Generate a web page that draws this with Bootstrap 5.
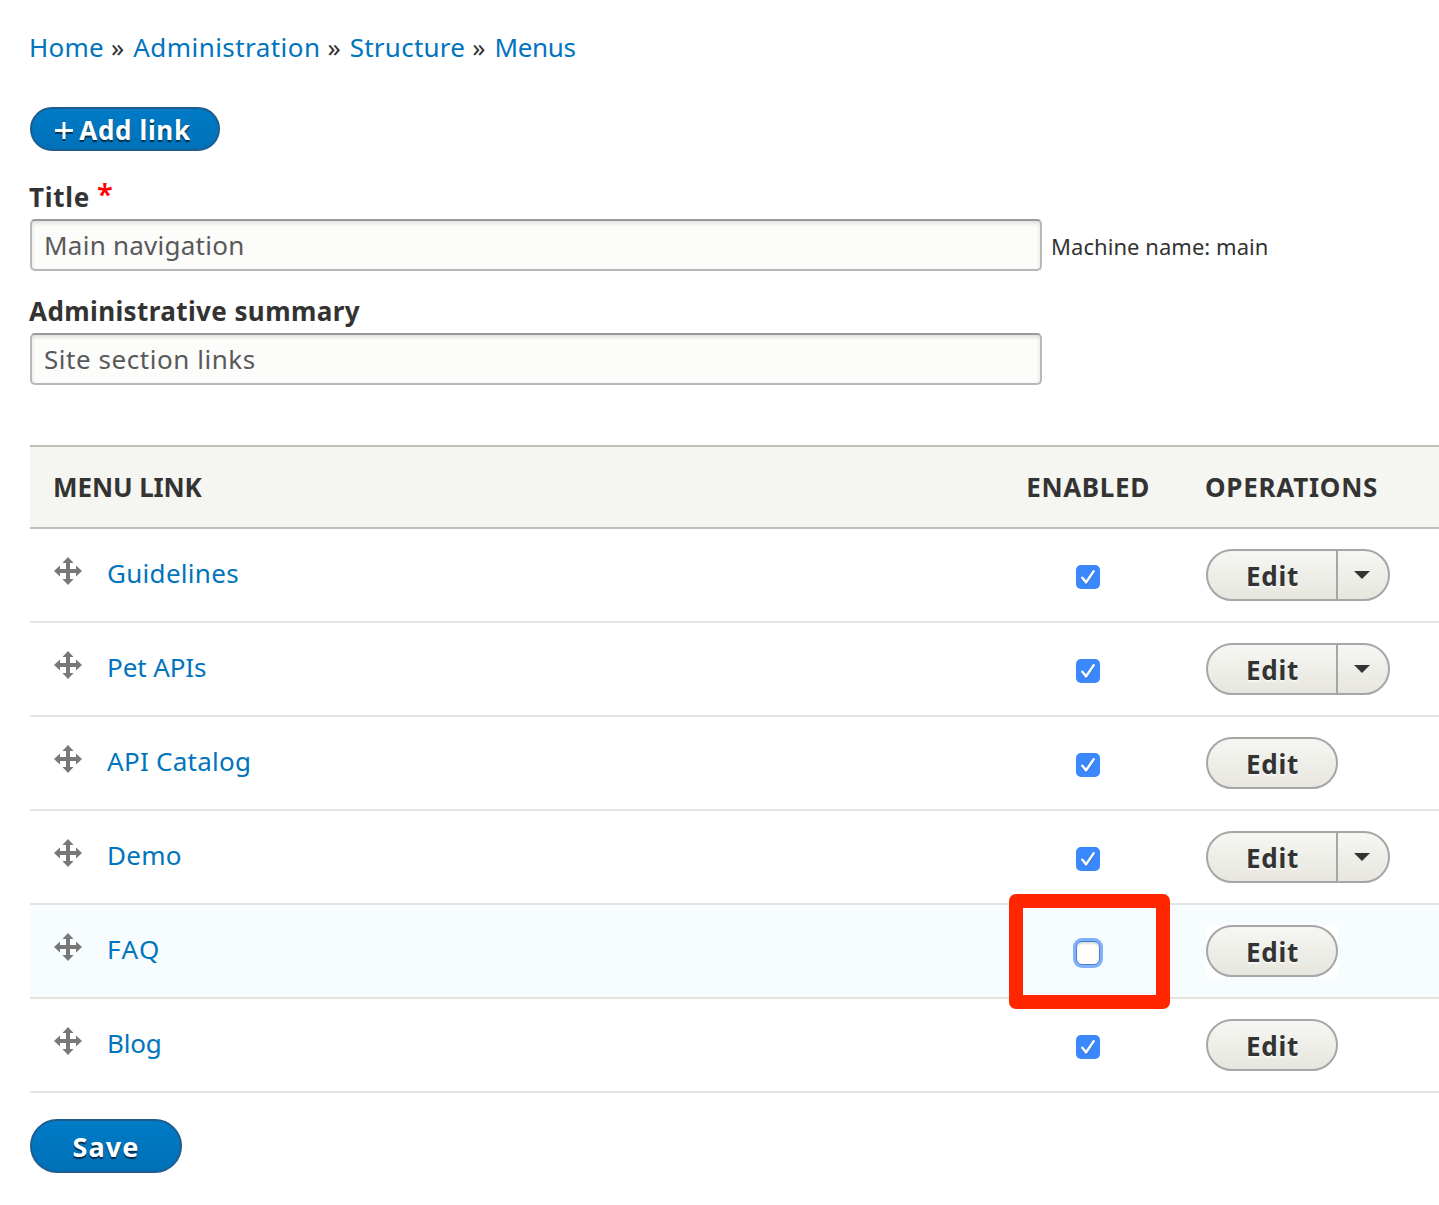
<!DOCTYPE html>
<html lang="en">
<head>
<meta charset="utf-8">
<meta name="viewport" content="width=device-width, initial-scale=1">
<title>Edit menu Main navigation</title>
<link href="https://cdn.jsdelivr.net/npm/bootstrap@5.3.0/dist/css/bootstrap.min.css" rel="stylesheet">
<style>
  body { font-family: "Noto Sans", sans-serif; font-size: 26px; line-height: 26px; color: #333; background: #fff; overflow: hidden; }
  a { color: #0074bd; text-decoration: none; }
  .page { padding: 34px 0 0 30px; }

  .crumbs { margin: 0 0 47px -1px; height: 26px; white-space: nowrap; }
  .crumbs .sep { margin: 0 9px 0 7px; }
  .crumbs .sep-tight { margin-right: 9px; }

  .btn-action { display: flex; align-items: center; justify-content: center; padding: 0; border: 2px solid #1e5c90; border-radius: 27px; color: #fff; font-weight: 700; font-size: 26px; line-height: 26px; background: linear-gradient(#007bc6, #0071b8); text-shadow: 0 2px 1px rgba(0,0,0,.6); }
  .btn-action:hover { color: #fff; }
  .btn-add { width: 190px; height: 44px; letter-spacing: .65px; margin-bottom: 32px; padding: 1px 3px 0 0; }
  .btn-add svg { margin: 2px 6px 0 -1px; overflow: visible; filter: drop-shadow(0 2px .5px rgba(0,0,0,.5)); }
  .btn-save { width: 152px; height: 54px; font-size: 27px; letter-spacing: 1.1px; margin-top: 26px; padding-top: 2px; }

  .field-label { display: flex; font-weight: 700; margin: 0 0 9px -1px; padding-top: 1px; height: 27px; letter-spacing: .4px; }
  .label-title { letter-spacing: .75px; }
  .label-summary { margin-top: 26px; }
  .star { color: #f00; font-size: 29px; margin-left: 7px; line-height: 20px; font-weight: 600; }
  .field-input { width: 1012px; height: 52px; padding: 0 12px; font-size: 26px; line-height: 26px; color: #595959; background: #fcfcfa; border: 2px solid #b8b8b8; border-top-color: #999; border-radius: 5px; box-shadow: inset 0 2px 4px rgba(0,0,0,.125); letter-spacing: .25px; }
  .machine { font-size: 22px; letter-spacing: .05px; margin-left: 9px; padding-top: 1px; }

  .menu-table { width: 1409px; table-layout: fixed; border-collapse: separate; border-spacing: 0; margin: 60px 0 0; color: #333; }
  .menu-table th { height: 84px; padding: 0 24px 0 23px; background: #f5f5f2; border-top: 2px solid #bfbfba; border-bottom: 2px solid #bfbfba; vertical-align: middle; font-weight: 700; letter-spacing: -.1px; }
  .menu-table td { position: relative; height: 94px; padding: 0 24px; border-bottom: 2px solid #e6e4df; vertical-align: middle; }
  .focus-row td { background: #f7fcff; }
  .col-link { width: 972px; }
  .col-check { width: 172px; }
  .menu-table .col-ops { padding-left: 32px; }
  .menu-table th.col-ops { padding-left: 31px; letter-spacing: .75px; }
  .menu-table th.col-enabled { padding: 0; letter-spacing: .65px; text-align: center; }
  .handle { margin: 0 25px 8px 0; fill: #787878; }
  .link-text { margin-bottom: 4px; }

  .toggle.form-check-input { display: block; float: none; width: 24px; height: 24px; margin: 4px auto 0; border: 0; border-radius: 5px; background-color: #fff; }
  .toggle.form-check-input:checked { background-color: #3b87fd; background-size: 24px 24px; background-image: url("data:image/svg+xml,%3Csvg xmlns='http://www.w3.org/2000/svg' viewBox='0 0 24 24'%3E%3Cpath d='M6.3 13.8l3.9 4.6 7.4-11' fill='none' stroke='%23000' stroke-opacity='.18' stroke-width='2.6' stroke-linecap='round' stroke-linejoin='round'/%3E%3Cpath d='M6.3 12.8l3.8 4.6 7.5-11' fill='none' stroke='%23fff' stroke-width='2.5' stroke-linecap='round' stroke-linejoin='round'/%3E%3C/svg%3E"); }
  .toggle.form-check-input.is-focused { border: 1px solid #4680cf; border-radius: 6px; box-shadow: 0 0 0 3px #80b0fa, inset 0 2px 2px rgba(0,0,0,.14); }
  .highlight { position: absolute; z-index: 2; left: 7px; top: -11.5px; width: 161px; height: 115.5px; border: 14px solid #ff2600; border-radius: 7px; }

  .ops { width: max-content; border: 2px solid #a6a6a6; border-radius: 26px; height: 52px; background: linear-gradient(#f6f6f3, #e7e7df); overflow: hidden; }
  .ops .btn { --bs-btn-border-width: 0; border-radius: 0; padding: 0; color: #333; font-size: 26px; line-height: 26px; }
  .ops .btn-edit { width: 128px; font-weight: 700; letter-spacing: .7px; padding: 1px 0 0 1px; text-shadow: 0 2px 0 rgba(255,255,255,.6); }
  .ops .btn-more { width: 52px; border-left: 2px solid #a6a6a6; padding-right: 2px; }
  .backing { width: 132px; background: #fff; }

  .ls-home { letter-spacing: .25px; } .ls-admin { letter-spacing: .45px; } .ls-struct { letter-spacing: .25px; } .ls-menus { letter-spacing: -.35px; }
  .ls-guide { letter-spacing: .3px; } .ls-pet { letter-spacing: -.1px; } .ls-cat { letter-spacing: .27px; } .ls-demo { letter-spacing: .3px; } .ls-faq { letter-spacing: 1.5px; } .ls-blog { letter-spacing: -.2px; } .ls-summary { letter-spacing: .55px; }
</style>
</head>
<body>
<svg width="0" height="0" class="d-none">
  <symbol id="move" viewBox="0 0 28 28"><path d="M14 0l5.6 6H16v6h6V8.4l6 5.6-6 5.6V16h-6v6h3.6L14 28l-5.6-6H12v-6H6v3.6L0 14l6-5.6V12h6V6H8.4z"/></symbol>
</svg>
<main class="page">
  <nav class="crumbs d-flex" aria-label="breadcrumb">
    <a href="#" class="ls-home">Home</a><span class="sep">»</span><a href="#" class="ls-admin">Administration</a><span class="sep sep-tight">»</span><a href="#" class="ls-struct">Structure</a><span class="sep">»</span><a href="#" class="ls-menus">Menus</a>
  </nav>

  <a href="#" class="btn btn-action btn-add"><svg width="18" height="17" viewBox="0 0 18 17"><path d="M9 0v17M0 8.5h18" stroke="#fff" stroke-width="3"/></svg>Add link</a>

  <form>
    <label class="field-label label-title" for="title">Title <span class="star">*</span></label>
    <div class="d-flex align-items-center">
      <input id="title" class="form-control field-input flex-shrink-0" type="text" value="Main navigation">
      <span class="machine">Machine name: main</span>
    </div>

    <label class="field-label label-summary" for="summary">Administrative summary</label>
    <input id="summary" class="form-control field-input ls-summary" type="text" value="Site section links">

    <table class="menu-table">
      <colgroup><col class="col-link"><col class="col-check"><col></colgroup>
      <thead>
        <tr><th>MENU LINK</th><th class="col-enabled">ENABLED</th><th class="col-ops">OPERATIONS</th></tr>
      </thead>
      <tbody>
        <tr>
          <td><div class="d-flex align-items-center"><svg class="handle" width="28" height="28"><use href="#move"/></svg><a href="#" class="link-text ls-guide">Guidelines</a></div></td>
          <td><input class="form-check-input toggle" type="checkbox" checked></td>
          <td class="col-ops"><div class="ops d-flex"><button type="button" class="btn btn-edit">Edit</button><button type="button" class="btn btn-more d-flex align-items-center justify-content-center" aria-label="More"><svg width="16" height="8" viewBox="0 0 16 8"><path d="M0 0h16L8 8z" fill="#333"/></svg></button></div></td>
        </tr>
        <tr>
          <td><div class="d-flex align-items-center"><svg class="handle" width="28" height="28"><use href="#move"/></svg><a href="#" class="link-text ls-pet">Pet APIs</a></div></td>
          <td><input class="form-check-input toggle" type="checkbox" checked></td>
          <td class="col-ops"><div class="ops d-flex"><button type="button" class="btn btn-edit">Edit</button><button type="button" class="btn btn-more d-flex align-items-center justify-content-center" aria-label="More"><svg width="16" height="8" viewBox="0 0 16 8"><path d="M0 0h16L8 8z" fill="#333"/></svg></button></div></td>
        </tr>
        <tr>
          <td><div class="d-flex align-items-center"><svg class="handle" width="28" height="28"><use href="#move"/></svg><a href="#" class="link-text ls-cat">API Catalog</a></div></td>
          <td><input class="form-check-input toggle" type="checkbox" checked></td>
          <td class="col-ops"><div class="ops d-flex"><button type="button" class="btn btn-edit">Edit</button></div></td>
        </tr>
        <tr>
          <td><div class="d-flex align-items-center"><svg class="handle" width="28" height="28"><use href="#move"/></svg><a href="#" class="link-text ls-demo">Demo</a></div></td>
          <td><input class="form-check-input toggle" type="checkbox" checked></td>
          <td class="col-ops"><div class="ops d-flex"><button type="button" class="btn btn-edit">Edit</button><button type="button" class="btn btn-more d-flex align-items-center justify-content-center" aria-label="More"><svg width="16" height="8" viewBox="0 0 16 8"><path d="M0 0h16L8 8z" fill="#333"/></svg></button></div></td>
        </tr>
        <tr class="focus-row">
          <td><div class="d-flex align-items-center"><svg class="handle" width="28" height="28"><use href="#move"/></svg><a href="#" class="link-text ls-faq">FAQ</a></div></td>
          <td><input class="form-check-input toggle is-focused" type="checkbox"><div class="highlight"></div></td>
          <td class="col-ops"><div class="backing"><div class="ops d-flex"><button type="button" class="btn btn-edit">Edit</button></div></div></td>
        </tr>
        <tr>
          <td><div class="d-flex align-items-center"><svg class="handle" width="28" height="28"><use href="#move"/></svg><a href="#" class="link-text ls-blog">Blog</a></div></td>
          <td><input class="form-check-input toggle" type="checkbox" checked></td>
          <td class="col-ops"><div class="ops d-flex"><button type="button" class="btn btn-edit">Edit</button></div></td>
        </tr>
      </tbody>
    </table>

    <button type="button" class="btn btn-action btn-save">Save</button>
  </form>
</main>
<script src="https://cdn.jsdelivr.net/npm/bootstrap@5.3.0/dist/js/bootstrap.bundle.min.js"></script>
</body>
</html>
